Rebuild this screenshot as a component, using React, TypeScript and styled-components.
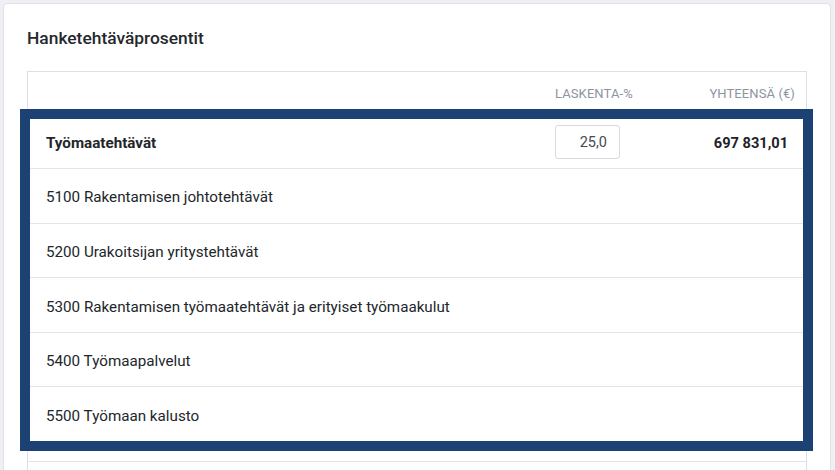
import React from "react";
import styled, { createGlobalStyle } from "styled-components";

const GlobalStyle = createGlobalStyle`
  html, body {
    margin: 0;
    padding: 0;
    background: #eff0f3;
    font-family: Roboto, "Liberation Sans", sans-serif;
    color: #212529;
  }
`;

const Page = styled.div`
  padding: 3px 4px 0 3px;
  height: 467px;
  overflow: hidden;
`;

const Card = styled.section`
  background: #ffffff;
  border: 1px solid #dfe1e5;
  border-radius: 4px;
  padding: 23px 23px 0;
  min-height: 600px;
`;

const Title = styled.h2`
  margin: 0 0 22px;
  font-size: 17.4px;
  line-height: 22px;
  font-weight: 500;
  color: #24282d;
`;

const TableBox = styled.div`
  position: relative;
  border: 1px solid #dcdfe3;
  border-bottom: none;
`;

const Row = styled.div<{ $height: number; $line?: boolean }>`
  display: grid;
  grid-template-columns: 1fr 110px 141px;
  align-items: center;
  height: ${(p) => p.$height}px;
  box-sizing: border-box;
  border-bottom: ${(p) => (p.$line ? "1px solid #e2e4e8" : "none")};
`;

const HeadCell = styled.div<{ $align?: "left" | "right" }>`
  font-size: 13px;
  letter-spacing: 0.1px;
  text-transform: uppercase;
  color: #8d949e;
  text-align: ${(p) => p.$align ?? "left"};
  padding-right: ${(p) => (p.$align === "right" ? "11px" : "0")};
  padding-top: 1px;
`;

const LabelCell = styled.div<{ $bold?: boolean }>`
  padding: 3px 0 0 18px;
  font-size: 15.2px;
  font-weight: ${(p) => (p.$bold ? 700 : 400)};
  color: #22262b;
`;

const PctCell = styled.div`
  display: flex;
  align-items: center;
  padding-top: 2px;
`;

const PctInput = styled.input`
  width: 65px;
  height: 34px;
  box-sizing: border-box;
  border: 1px solid #d6dade;
  border-radius: 3px;
  padding: 0 12px 0 6px;
  text-align: right;
  font-family: Roboto, "Liberation Sans", sans-serif;
  font-size: 14.5px;
  color: #454a50;
  background: #fff;
  outline: none;
`;

const TotalCell = styled.div`
  text-align: right;
  padding: 3px 18px 0 0;
  font-size: 14.6px;
  font-weight: 700;
  color: #1f2328;
`;

const Highlight = styled.div`
  position: absolute;
  left: -8px;
  top: 37px;
  width: 793px;
  height: 342px;
  box-sizing: border-box;
  border: 10px solid #1c4273;
  pointer-events: none;
`;

const items = [
  "5100 Rakentamisen johtotehtävät",
  "5200 Urakoitsijan yritystehtävät",
  "5300 Rakentamisen työmaatehtävät ja erityiset työmaakulut",
  "5400 Työmaapalvelut",
  "5500 Työmaan kalusto",
];

export default function App() {
  return (
    <>
      <GlobalStyle />
      <Page>
        <Card>
          <Title>Hanketehtäväprosentit</Title>
          <TableBox>
            <Row $height={42.5}>
              <div />
              <HeadCell>Laskenta-%</HeadCell>
              <HeadCell $align="right">Yhteensä (€)</HeadCell>
            </Row>
            <Row $height={54.6} $line>
              <LabelCell $bold>Työmaatehtävät</LabelCell>
              <PctCell>
                <PctInput defaultValue="25,0" />
              </PctCell>
              <TotalCell>697 831,01</TotalCell>
            </Row>
            {items.map((label) => (
              <Row key={label} $height={54.6} $line>
                <LabelCell>{label}</LabelCell>
                <div />
                <div />
              </Row>
            ))}
            <Row $height={20} $line>
              <div />
              <div />
              <div />
            </Row>
            <Row $height={54.6} $line>
              <div />
              <div />
              <div />
            </Row>
            <Highlight />
          </TableBox>
        </Card>
      </Page>
    </>
  );
}
